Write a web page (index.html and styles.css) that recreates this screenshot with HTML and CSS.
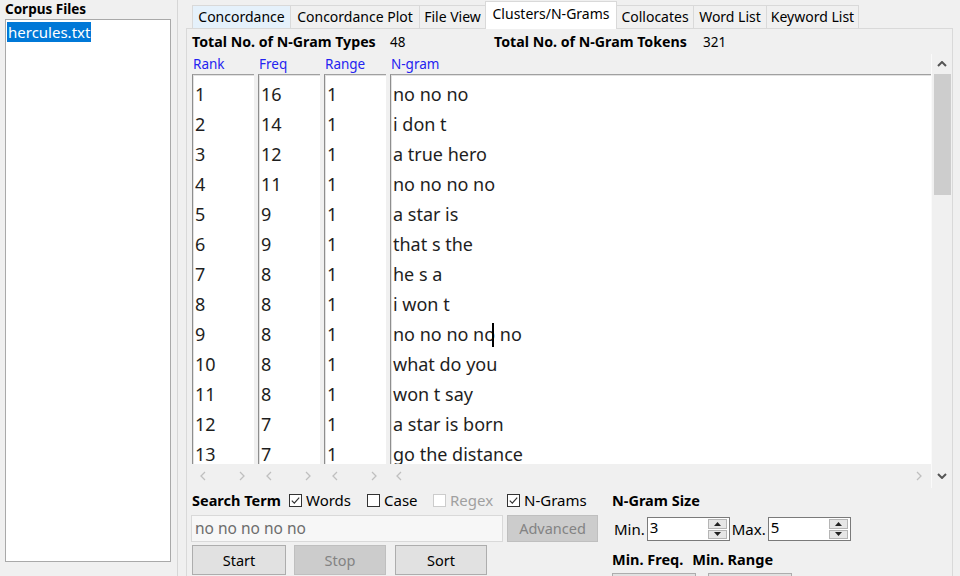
FILE: index.html
```html
<!DOCTYPE html>
<html>
<head>
<meta charset="utf-8">
<link rel="stylesheet" href="styles.css">
</head>
<body>
<div class="app">
  <aside class="left">
    <div class="left-title">Corpus Files</div>
    <div class="filelist"><span class="sel">hercules.txt</span></div>
  </aside>
  <div class="splitter"></div>
  <main class="right">
    <div class="tabs">
      <div class="tab hover w1">Concordance</div>
      <div class="tab w2">Concordance Plot</div>
      <div class="tab w3">File View</div>
      <div class="tab active w4">Clusters/N-Grams</div>
      <div class="tab w5">Collocates</div>
      <div class="tab w6">Word List</div>
      <div class="tab w7">Keyword List</div>
    </div>
    <div class="pane">
      <div class="stats">
        <span class="b stat1">Total No. of N-Gram Types</span><span class="v1">48</span>
        <span class="b stat2">Total No. of N-Gram Tokens</span><span>321</span>
      </div>
      <div class="results">
        <div class="cols">
          <div class="col narrow">
            <div class="hdr">Rank</div>
            <div class="list">
              <div>1</div><div>2</div><div>3</div><div>4</div><div>5</div><div>6</div><div>7</div><div>8</div><div>9</div><div>10</div><div>11</div><div>12</div><div>13</div>
            </div>
            <div class="hscroll"><svg class="chev" viewBox="0 0 6 10"><path d="M5 1 L1 5 L5 9"/></svg><svg class="chev" viewBox="0 0 6 10"><path d="M1 1 L5 5 L1 9"/></svg></div>
          </div>
          <div class="col narrow">
            <div class="hdr">Freq</div>
            <div class="list">
              <div>16</div><div>14</div><div>12</div><div>11</div><div>9</div><div>9</div><div>8</div><div>8</div><div>8</div><div>8</div><div>8</div><div>7</div><div>7</div>
            </div>
            <div class="hscroll"><svg class="chev" viewBox="0 0 6 10"><path d="M5 1 L1 5 L5 9"/></svg><svg class="chev" viewBox="0 0 6 10"><path d="M1 1 L5 5 L1 9"/></svg></div>
          </div>
          <div class="col narrow">
            <div class="hdr">Range</div>
            <div class="list">
              <div>1</div><div>1</div><div>1</div><div>1</div><div>1</div><div>1</div><div>1</div><div>1</div><div>1</div><div>1</div><div>1</div><div>1</div><div>1</div>
            </div>
            <div class="hscroll"><svg class="chev" viewBox="0 0 6 10"><path d="M5 1 L1 5 L5 9"/></svg><svg class="chev" viewBox="0 0 6 10"><path d="M1 1 L5 5 L1 9"/></svg></div>
          </div>
          <div class="col wide">
            <div class="hdr">N-gram</div>
            <div class="list">
              <div>no no no</div><div>i don t</div><div>a true hero</div><div>no no no no</div><div>a star is</div><div>that s the</div><div>he s a</div><div>i won t</div><div>no no no no<span class="caret"></span> no</div><div>what do you</div><div>won t say</div><div>a star is born</div><div>go the distance</div>
            </div>
            <div class="hscroll wide-h"><svg class="chev" viewBox="0 0 6 10"><path d="M5 1 L1 5 L5 9"/></svg><svg class="chev" viewBox="0 0 6 10"><path d="M1 1 L5 5 L1 9"/></svg></div>
          </div>
        </div>
        <div class="vscroll">
          <svg class="varrow" viewBox="0 0 10 6"><path d="M1 5 L5 1 L9 5"/></svg>
          <div class="thumb"></div>
          <div class="vspace"></div>
          <svg class="varrow" viewBox="0 0 10 6"><path d="M1 1 L5 5 L9 1"/></svg>
        </div>
      </div>
      <div class="controls">
        <div class="cleft">
          <div class="row1">
            <span class="b st">Search Term</span>
            <label class="cb c1"><svg viewBox="0 0 13 13"><rect x="0.5" y="0.5" width="12" height="12" class="box"/><path d="M2.8 6.6 L5.3 9.1 L10.2 3.6" class="tick"/></svg>Words</label>
            <label class="cb c2"><svg viewBox="0 0 13 13"><rect x="0.5" y="0.5" width="12" height="12" class="box"/></svg>Case</label>
            <label class="cb c3 dis"><svg viewBox="0 0 13 13"><rect x="0.5" y="0.5" width="12" height="12" class="box"/></svg>Regex</label>
            <label class="cb"><svg viewBox="0 0 13 13"><rect x="0.5" y="0.5" width="12" height="12" class="box"/><path d="M2.8 6.6 L5.3 9.1 L10.2 3.6" class="tick"/></svg>N-Grams</label>
          </div>
          <div class="row2">
            <div class="input">no no no no no</div>
            <div class="btn disabled adv">Advanced</div>
          </div>
          <div class="row3">
            <div class="btn">Start</div>
            <div class="btn disabled">Stop</div>
            <div class="btn">Sort</div>
          </div>
        </div>
        <div class="cright">
          <div class="b rtitle">N-Gram Size</div>
          <div class="spinrow">
            <span class="slabel">Min.</span>
            <div class="spin"><span>3</span><div class="sbtns"><div class="sb"><svg viewBox="0 0 7 4"><path d="M0 4 L3.5 0 L7 4Z"/></svg></div><div class="sb"><svg viewBox="0 0 7 4"><path d="M0 0 L3.5 4 L7 0Z"/></svg></div></div></div>
            <span class="slabel">Max.</span>
            <div class="spin"><span>5</span><div class="sbtns"><div class="sb"><svg viewBox="0 0 7 4"><path d="M0 4 L3.5 0 L7 4Z"/></svg></div><div class="sb"><svg viewBox="0 0 7 4"><path d="M0 0 L3.5 4 L7 0Z"/></svg></div></div></div>
          </div>
          <div class="minrow"><span class="b">Min. Freq.</span><span class="b">Min. Range</span></div>
          <div class="boxrow"><div class="mbox m1"></div><div class="mbox m2"></div></div>
        </div>
      </div>
    </div>
  </main>
</div>
</body>
</html>
```
FILE: styles.css
```css
html, body {
  margin: 0;
  padding: 0;
}
body {
  width: 960px;
  height: 576px;
  overflow: hidden;
  background: #f0f0f0;
  font-family: "Noto Sans", "Open Sans", sans-serif;
  font-size: 13.5px;
  color: #000;
}
.b { font-weight: bold; }
.app {
  display: flex;
  height: 576px;
}
.left {
  width: 177px;
  flex: none;
  padding-left: 5px;
  box-sizing: border-box;
}
.left-title {
  font-weight: bold;
  font-size: 13.5px;
  line-height: 19px;
  height: 19px;
}
.filelist {
  width: 166px;
  height: 543px;
  box-sizing: border-box;
  border: 1px solid #a9a9a9;
  background: #fff;
}
.sel {
  display: inline-block;
  margin: 2px 0 0 1px;
  padding: 0 1px;
  background: #0078d7;
  color: #fff;
  font-size: 15px;
  line-height: 20px;
}
.splitter {
  width: 9px;
  flex: none;
  box-sizing: border-box;
  border-left: 1px solid #d6d6d6;
}
.right {
  flex: 1;
  display: flex;
  flex-direction: column;
  padding-right: 7px;
}
.tabs {
  display: flex;
  align-items: flex-end;
  height: 28px;
  padding-left: 6px;
  flex: none;
}
.tab {
  height: 23px;
  box-sizing: border-box;
  border: 1px solid #d9d9d9;
  border-bottom: none;
  margin-right: -1px;
  background: #f0f0f0;
  text-align: center;
  line-height: 22px;
  font-size: 14px;
  white-space: nowrap;
}
.tab.hover { background: #e5f1fb; }
.tab.active {
  background: #fff;
  line-height: 24px;
  position: relative;
  margin-bottom: -1px;
  height: 28px;
  z-index: 1;
}
.w1 { width: 99px; }
.w2 { width: 130px; }
.w3 { width: 67px; }
.w4 { width: 132px; }
.w5 { width: 78px; }
.w6 { width: 74px; }
.w7 { width: 93px; }
.pane {
  flex: 1;
  border: 1px solid #d9d9d9;
  border-bottom: none;
  padding-left: 5px;
  display: flex;
  flex-direction: column;
  min-height: 0;
}
.stats {
  height: 24px;
  line-height: 24px;
  padding-top: 1px;
  display: flex;
  white-space: nowrap;
  font-size: 13.5px;
}
.stats .b { font-size: 14.2px; }
.stat1 { width: 198px; }
.v1 { width: 104px; }
.stat2 { width: 209px; }
.results {
  display: flex;
  height: 434px;
  flex: none;
}
.cols {
  display: flex;
  gap: 4px;
  flex: 1;
}
.col {
  display: flex;
  flex-direction: column;
}
.narrow { width: 62px; }
.wide { flex: 1; }
.hdr {
  height: 20px;
  line-height: 20px;
  color: #2323f0;
  padding-left: 1px;
  font-size: 13.5px;
}
.list {
  height: 390px;
  box-sizing: border-box;
  background: #fff;
  border-top: 1px solid #a0a0a0;
  border-left: 1px solid #8e8e8e;
  box-shadow: inset 1px 1px 0 #e2e2e2;
  padding: 4px 0 0 2px;
  overflow: hidden;
  font-size: 18px;
  color: #1e1e1e;
}
.list div {
  height: 30px;
  line-height: 30px;
  white-space: nowrap;
}
.caret {
  display: inline-block;
  width: 2px;
  height: 24px;
  background: #000;
  vertical-align: middle;
  margin-left: -3px;
  margin-right: 1px;
  position: relative;
  top: -1px;
}
.hscroll {
  height: 24px;
  display: flex;
  align-items: center;
  justify-content: space-between;
  padding: 0 9px 0 8px;
}
.wide-h { padding: 0 9px 0 6px; }
.chev {
  width: 6px;
  height: 10px;
  fill: none;
  stroke: #bfbfbf;
  stroke-width: 1.3;
}
.vscroll {
  width: 21px;
  flex: none;
  display: flex;
  flex-direction: column;
  align-items: center;
  box-sizing: border-box;
  border-left: 1px solid #fafafa;
  padding-top: 7px;
  background: #f0f0f0;
}
.varrow {
  width: 10px;
  height: 6px;
  fill: none;
  stroke: #555;
  stroke-width: 2;
  flex: none;
}
.thumb {
  width: 17px;
  height: 121px;
  background: #cdcdcd;
  margin-top: 7px;
  flex: none;
}
.vspace { flex: 1; }
.vscroll .varrow:last-child { margin-bottom: 9px; }
.controls {
  display: flex;
  font-size: 15px;
}
.controls .b { font-size: 14.5px; }
.cleft {
  width: 407px;
  margin-left: -1px;
  flex: none;
}
.row1 {
  height: 24px;
  display: flex;
  align-items: center;
  padding-left: 1px;
  white-space: nowrap;
}
.row1 .st { width: 97px; }
.cb {
  display: flex;
  align-items: center;
}
.c1 { width: 78px; }
.c2 { width: 66px; }
.c3 { width: 74px; }
.cb svg {
  width: 13px;
  height: 13px;
  margin-right: 4px;
}
.box { fill: #fff; stroke: #333; stroke-width: 1; }
.tick { fill: none; stroke: #333; stroke-width: 1.2; }
.cb.dis { color: #a0a0a0; }
.cb.dis .box { stroke: #cccccc; }
.row2 {
  display: flex;
  margin-top: 3px;
  height: 27px;
}
.input {
  width: 312px;
  box-sizing: border-box;
  border: 1px solid #d9d9d9;
  background: #f7f7f7;
  color: #6d6d6d;
  font-size: 15.5px;
  line-height: 25px;
  padding-left: 3px;
}
.btn {
  box-sizing: border-box;
  border: 1px solid #adadad;
  background: #e1e1e1;
  text-align: center;
  font-size: 14.5px;
  color: #000;
}
.btn.disabled {
  background: #cccccc;
  border-color: #bfbfbf;
  color: #838383;
}
.adv {
  width: 91px;
  margin-left: 4px;
  line-height: 25px;
}
.row3 {
  display: flex;
  margin-top: 3px;
  padding-left: 1px;
}
.row3 .btn {
  height: 30px;
  line-height: 28px;
  width: 94px;
}
.row3 .btn + .btn { margin-left: 8px; width: 92px; }
.row3 .btn:last-child { margin-left: 9px; }
.cright {
  margin-left: 14px;
}
.rtitle {
  height: 24px;
  line-height: 24px;
}
.spinrow {
  display: flex;
  align-items: center;
  margin-top: 5px;
  height: 24px;
}
.slabel {
  font-size: 15px;
  margin: 0 2px 0 2px;
}
.spin {
  width: 83px;
  height: 24px;
  box-sizing: border-box;
  border: 1px solid #7a7a7a;
  background: #fff;
  display: flex;
  justify-content: space-between;
  font-size: 15px;
  line-height: 19px;
  padding-left: 2px;
}
.sbtns {
  width: 19px;
  display: flex;
  flex-direction: column;
  padding: 1px 2px 1px 0;
  gap: 1px;
}
.sb {
  flex: 1;
  background: #e6e6e6;
  border: 1px solid #b5b5b5;
  display: flex;
  align-items: center;
  justify-content: center;
}
.sb svg {
  width: 7px;
  height: 4px;
  fill: #222;
}
.minrow {
  margin-top: 8px;
  height: 20px;
  line-height: 20px;
  display: flex;
  gap: 9px;
}
.boxrow {
  display: flex;
  margin-top: 4px;
}
.mbox {
  height: 20px;
  border: 1px solid #adadad;
  background: #e1e1e1;
  box-sizing: border-box;
}
.m1 { width: 84px; }
.m2 { width: 84px; margin-left: 12px; }
```
